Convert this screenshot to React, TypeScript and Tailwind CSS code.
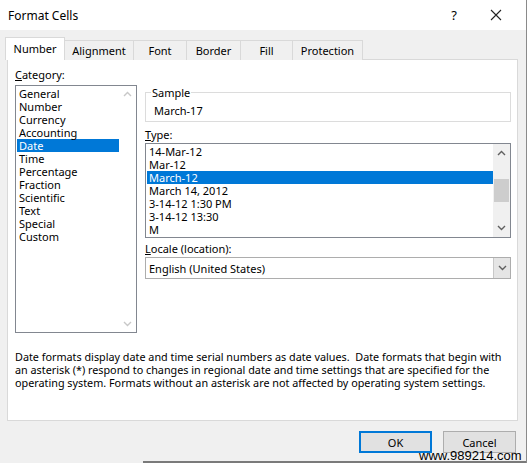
import React from "react";

const categories = [
  "General",
  "Number",
  "Currency",
  "Accounting",
  "Date",
  "Time",
  "Percentage",
  "Fraction",
  "Scientific",
  "Text",
  "Special",
  "Custom",
];

const types = [
  "14-Mar-12",
  "Mar-12",
  "March-12",
  "March 14, 2012",
  "3-14-12 1:30 PM",
  "3-14-12 13:30",
  "M",
];

const tabs = ["Alignment", "Font", "Border", "Fill", "Protection"];
const tabWidths = ["w-[69px]", "w-[53px]", "w-[54px]", "w-[52px]", "w-[70px]"];

function Chevron({ up, light }: { up?: boolean; light?: boolean }) {
  return (
    <svg width="9" height="6" viewBox="0 0 9 6">
      <path
        d={up ? "M1 5 L4.5 1.5 L8 5" : "M1 1 L4.5 4.5 L8 1"}
        fill="none"
        stroke={light ? "#c8c8c8" : "#606060"}
        strokeWidth="1.4"
      />
    </svg>
  );
}

export default function App() {
  return (
    <div
      className="relative w-[527px] h-[463px] bg-[#f0f0f0] border-r border-[#8a8a8a] overflow-hidden text-black text-[11px] leading-[13px]"
      style={{ fontFamily: '"Noto Sans", "Segoe UI", sans-serif' }}
    >
      {/* title bar */}
      <div className="h-[30px] bg-white flex items-center pl-2 pr-[24px] text-[12px]">
        <span className="flex-1">Format Cells</span>
        <span className="mr-[33px] text-[13px]">?</span>
        <svg width="12" height="12" viewBox="0 0 12 12">
          <path d="M1 1 L11 11 M11 1 L1 11" stroke="#222" strokeWidth="1.1" />
        </svg>
      </div>

      <div className="pl-[7px] pt-[7px]">
        {/* tabs */}
        <div className="flex items-end h-[23px] relative z-10">
          <div className="h-[23px] w-[60px] -ml-[2px] bg-white border border-b-0 border-[#d9d9d9] flex items-center justify-center pb-[2px]">
            Number
          </div>
          {tabs.map((t, i) => (
            <div
              key={t}
              className={`h-[20px] ${tabWidths[i]} border border-b-0 border-l-0 border-[#d9d9d9] bg-[#f0f0f0] flex items-center justify-center`}
            >
              {t}
            </div>
          ))}
        </div>

        {/* panel */}
        <div className="w-[511px] h-[362px] -mt-px bg-white border border-[#d9d9d9]">
          <div className="flex pl-[7px] pt-[8px]">
            {/* category column */}
            <div className="w-[130px]">
              <div className="h-[13px]">
                <span className="underline">C</span>ategory:
              </div>
              <div className="mt-[4px] w-[122px] h-[248px] border border-[#828790] flex">
                <div className="flex-1 pt-[1px] pl-[1px]">
                  {categories.map((c) => (
                    <div
                      key={c}
                      className={`h-[13px] pl-[2px] ${c === "Date" ? "bg-[#0078d7] text-white" : ""}`}
                    >
                      {c}
                    </div>
                  ))}
                </div>
                <div className="w-[17px] flex flex-col justify-between items-center py-[5px]">
                  <Chevron up light />
                  <Chevron light />
                </div>
              </div>
            </div>

            {/* right column */}
            <div className="w-[366px] pt-[24px]">
              <div className="relative h-[30px] border border-[#dcdcdc] pl-[8px] pt-[11px]">
                <span className="absolute -top-[7px] left-[5px] bg-white px-[1px]">Sample</span>
                March-17
              </div>

              <div className="mt-[6px] h-[13px]">
                <span className="underline">T</span>ype:
              </div>
              <div className="mt-[2px] h-[95px] border border-[#828790] flex">
                <div className="flex-1 pt-[1px] pl-[1px]">
                  {types.map((t) => (
                    <div
                      key={t}
                      className={`h-[13px] pl-[2px] ${t === "March-12" ? "bg-[#0078d7] text-white" : ""}`}
                    >
                      {t}
                    </div>
                  ))}
                </div>
                <div className="w-[17px] bg-[#f0f0f0] flex flex-col items-center pt-[6px] pb-[6px]">
                  <Chevron up />
                  <div className="mt-[23px] w-[15px] h-[23px] bg-[#cdcdcd]" />
                  <div className="flex-1" />
                  <Chevron />
                </div>
              </div>

              <div className="mt-[4px] h-[13px]">
                <span className="underline">L</span>ocale (location):
              </div>
              <div className="mt-[2px] h-[22px] border border-[#adadad] flex items-center">
                <div className="flex-1 pl-[3px]">English (United States)</div>
                <div className="w-[17px] h-full bg-[#e5e5e5] border-l border-[#c8c8c8] flex items-center justify-center">
                  <Chevron />
                </div>
              </div>
            </div>
          </div>

          <div className="pl-[7px] pt-[17px] whitespace-nowrap text-[10.8px]">
            Date formats display date and time serial numbers as date values.&nbsp; Date formats that begin with
            <br />
            an asterisk (*) respond to changes in regional date and time settings that are specified for the
            <br />
            operating system. Formats without an asterisk are not affected by operating system settings.
          </div>
        </div>

        {/* buttons */}
        <div className="flex justify-end gap-[11px] pr-[10px] pt-[10px]">
          <button className="w-[73px] h-[22px] bg-[#e1e1e1] border-2 border-[#0078d7] flex items-center justify-center">
            OK
          </button>
          <button className="w-[73px] h-[22px] bg-[#e1e1e1] border border-[#adadad] flex items-center justify-center">
            Cancel
          </button>
        </div>
      </div>

      {/* bottom frame edge */}
      <div className="absolute left-[143px] right-0 bottom-0 h-[2px] bg-[#7a7a7a]" />
      {/* watermark */}
      <div
        className="absolute left-[419px] top-[449px] text-[13px] leading-[13px] text-black"
        style={{ fontFamily: '"Liberation Sans", Arial, sans-serif' }}
      >
        www.989214.com
      </div>
    </div>
  );
}
